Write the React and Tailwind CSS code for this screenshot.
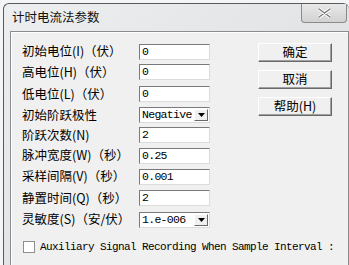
import React from "react";

const cjk = { fontFamily: '"Noto Sans CJK SC", "Noto Sans", sans-serif' };
const mono = { fontFamily: '"Liberation Mono", "DejaVu Sans Mono", monospace' };

const rows = [
  { label: "初始电位(I)（伏）", value: "0", h: "h-[19px]" },
  { label: "高电位(H)（伏）", value: "0", h: "h-[22px]" },
  { label: "低电位(L)（伏）", value: "0", h: "h-[22px]" },
  { label: "初始阶跃极性", value: "Negative", combo: true, h: "h-[20px]" },
  { label: "阶跃次数(N)", value: "2", h: "h-[20px]" },
  { label: "脉冲宽度(W)（秒）", value: "0.25", h: "h-[21px]" },
  { label: "采样间隔(V)（秒）", value: "0.001", h: "h-[21px]" },
  { label: "静置时间(Q)（秒）", value: "2", h: "h-[22px]" },
  { label: "灵敏度(S)（安/伏）", value: "1.e-006", combo: true, h: "h-[21px]" },
];

function Field({ value, combo }) {
  return (
    <div className="w-[71px] h-[16px] bg-white border border-t-[#7a7a7a] border-l-[#7a7a7a] border-r-[#dcdcdc] border-b-[#dcdcdc] flex items-center">
      <span className="pl-[2px] flex-1 text-[11.5px] tracking-[-0.7px] text-black leading-none overflow-hidden whitespace-nowrap" style={mono}>
        {value}
      </span>
      {combo && (
        <div className="w-[14px] h-[12px] mr-[1px] bg-[#f0f0f0] border border-t-white border-l-white border-r-[#696969] border-b-[#696969] flex items-center justify-center">
          <svg width="7" height="4" viewBox="0 0 7 4"><path d="M0 0h7L3.5 4z" fill="#000" /></svg>
        </div>
      )}
    </div>
  );
}

function Btn({ children }) {
  return (
    <div className="w-[74px] h-[19px] bg-[#f0f0f0] border border-t-white border-l-white border-r-[#696969] border-b-[#696969] shadow-[inset_-1px_-1px_0_#a0a0a0] flex items-center justify-center text-[12.5px] text-black leading-none" style={cjk}>
      {children}
    </div>
  );
}

export default function App() {
  return (
    <div className="w-[349px] h-[265px] bg-[#f4f5f6] overflow-hidden">
      <div className="ml-[3px] mt-[3px] w-[346px] h-[262px] rounded-t-[6px] border border-r-0 border-b-0 border-[#5a5a5a] bg-gradient-to-br from-[#eceeef] via-[#e2e4e6] to-[#d9dcdf] flex flex-col">
        <div className="h-[27px] flex items-start">
          <div className="pl-[8px] pt-[7px] text-[12.5px] text-[#111] leading-none" style={cjk}>计时电流法参数</div>
          <div className="ml-auto mr-[2px] w-[46px] h-[19px] rounded-b-[4px] border border-t-0 border-[#8a8a8a] bg-gradient-to-b from-[#e8e8e8] to-[#d2d2d2] flex items-center justify-center">
            <svg width="13" height="10" viewBox="0 0 13 10">
              <path d="M1 1l11 8M12 1L1 9" stroke="#fff" strokeWidth="3.2" strokeLinecap="round" />
              <path d="M1 1l11 8M12 1L1 9" stroke="#7a7a7a" strokeWidth="1.4" strokeLinecap="round" />
            </svg>
          </div>
        </div>
        <div className="ml-[6px] flex-1 bg-[#f0f0f0] border border-b-0 border-[#8c8c8c] shadow-[inset_1px_1px_0_#ffffff] flex flex-col">
          <div className="flex">
            <div className="pl-[11px] pt-[10px] flex flex-col">
              {rows.map((r) => (
                <div key={r.label} className={"flex items-center " + r.h}>
                  <div className="w-[117px] text-[12.5px] text-black leading-none whitespace-nowrap" style={cjk}>{r.label}</div>
                  <Field value={r.value} combo={r.combo} />
                </div>
              ))}
            </div>
            <div className="ml-[48px] pt-[11px] flex flex-col gap-[8px]">
              <Btn>确定</Btn>
              <Btn>取消</Btn>
              <Btn>帮助(H)</Btn>
            </div>
          </div>
          <div className="mt-[11px] pl-[12px] flex items-center gap-[5px]">
            <div className="w-[12px] h-[12px] bg-white border border-[#8e8f8f]"></div>
            <span className="text-[11px] tracking-[-0.6px] text-black whitespace-nowrap leading-none" style={mono}>
              Auxiliary Signal Recording When Sample Interval :
            </span>
          </div>
        </div>
      </div>
    </div>
  );
}
